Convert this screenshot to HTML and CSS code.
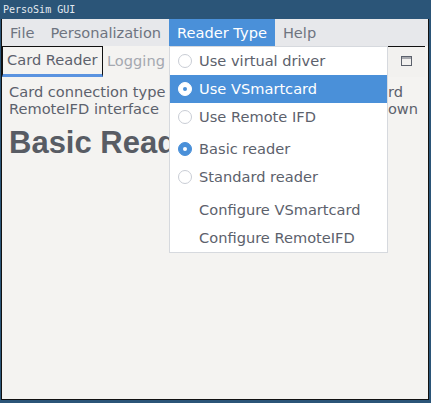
FILE: index.html
```html
<!DOCTYPE html>
<html>
<head>
<meta charset="utf-8">
<link rel="stylesheet" href="styles.css">
</head>
<body>
<div class="titlebar">PersoSim GUI</div>
<div class="window">
  <div class="menubar">
    <div class="mitem">File</div>
    <div class="mitem">Personalization</div>
    <div class="mitem open">Reader Type
      <div class="popup">
        <div class="pitem"><span class="radio"></span>Use virtual driver</div>
        <div class="pitem hl"><span class="radio on-hl"></span>Use VSmartcard</div>
        <div class="pitem"><span class="radio"></span>Use Remote IFD</div>
        <div class="sep"></div>
        <div class="pitem"><span class="radio on"></span>Basic reader</div>
        <div class="pitem"><span class="radio"></span>Standard reader</div>
        <div class="sep sep2"></div>
        <div class="pitem plain">Configure VSmartcard</div>
        <div class="pitem plain">Configure RemoteIFD</div>
      </div>
    </div>
    <div class="mitem">Help</div>
  </div>
  <div class="tabbar">
    <div class="tab active">Card Reader</div>
    <div class="tab">Logging</div>
    <div class="spacer"></div>
    <div class="corner">
      <svg width="11" height="10" viewBox="0 0 11 10"><rect x="0.5" y="0.5" width="10" height="9" fill="none" stroke="#5c616c"/><line x1="0" y1="2" x2="11" y2="2" stroke="#5c616c"/></svg>
    </div>
  </div>
  <div class="content">
    <div class="line l1"><span>Card connection type</span><span>VSmartcard</span></div>
    <div class="line l2"><span>RemoteIFD interface</span><span>shown</span></div>
    <h1 class="heading">Basic Reader</h1>
  </div>
</div>
</body>
</html>
```
FILE: styles.css
```css
html, body {
  margin: 0;
  padding: 0;
}
body {
  width: 431px;
  height: 403px;
  background: #2b5578;
  overflow: hidden;
  font-family: "DejaVu Sans", sans-serif;
}
.titlebar {
  height: 19px;
  line-height: 20px;
  padding-left: 3px;
  font-family: "DejaVu Sans Mono", monospace;
  font-size: 10px;
  color: #e4eaf0;
}
.window {
  margin: 0 2px 0 1px;
  height: 380px;
  border: 1px solid #111;
  border-top: none;
  background: #f4f3f1;
  display: flex;
  flex-direction: column;
}
.menubar {
  height: 27px;
  background: #e7e8eb;
  display: flex;
  align-items: stretch;
  font-size: 14.6px;
  color: #6e7480;
}
.mitem {
  padding: 0 8px;
  line-height: 27px;
  position: relative;
}
.mitem.open {
  background: #4a90d9;
  color: #fff;
}
.popup {
  position: absolute;
  left: 0;
  top: 27px;
  width: 217px;
  background: #fff;
  border: 1px solid #d6d9de;
  z-index: 5;
  color: #5c616c;
}
.pitem {
  height: 28px;
  display: flex;
  align-items: center;
  padding-left: 8px;
  line-height: 28px;
}
.pitem.plain {
  padding-left: 29px;
}
.pitem.hl {
  background: #4a90d9;
  color: #fff;
}
.sep {
  height: 4px;
}
.sep2 {
  height: 5px;
}
.radio {
  width: 14px;
  height: 14px;
  box-sizing: border-box;
  border-radius: 50%;
  border: 1px solid #c9cdd5;
  background: #fff;
  margin-right: 7px;
  position: relative;
  flex: none;
}
.radio.on {
  background: #4a90d9;
  border-color: #4a90d9;
}
.radio.on::after, .radio.on-hl::after {
  content: "";
  position: absolute;
  left: 4px;
  top: 4px;
  width: 4px;
  height: 4px;
  border-radius: 50%;
  background: #fff;
}
.radio.on-hl {
  border-color: #fff;
}
.radio.on-hl::after {
  background: #4a90d9;
}
.tabbar {
  height: 31px;
  display: flex;
  align-items: stretch;
  font-size: 14.6px;
}
.tab {
  padding: 0 4px 0 4px;
  line-height: 30px;
  color: #a4a8b0;
  box-sizing: border-box;
}
.tab.active {
  width: 101px;
  color: #5c616c;
  border: 1px solid #111;
  border-bottom: 3px solid #5a93e0;
  line-height: 26px;
  padding-left: 4px;
  margin-left: 0;
}
.spacer {
  flex: 1;
}
.corner {
  width: 37px;
  margin-right: 3px;
  box-sizing: border-box;
  border-top: 1px solid #111;
  background: #f2f1ef;
  display: flex;
  align-items: center;
  justify-content: center;
  padding-bottom: 2px;
}
.content {
  flex: 1;
  padding: 6px 7px 0 7px;
  font-size: 14.6px;
  color: #5c616c;
}
.line {
  display: flex;
  justify-content: space-between;
  line-height: 17px;
  white-space: nowrap;
}
.l1 {
  width: 394px;
}
.l2 {
  width: 409px;
}
.heading {
  margin: 8px 0 0 0;
  font-family: "Liberation Sans", Arial, sans-serif;
  font-weight: bold;
  font-size: 31px;
  line-height: 35px;
  color: #585c64;
}
```
